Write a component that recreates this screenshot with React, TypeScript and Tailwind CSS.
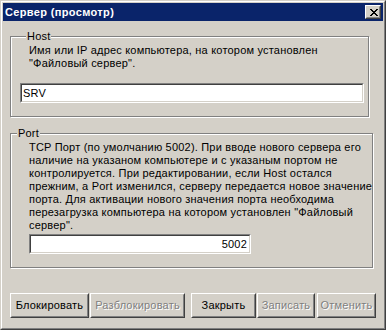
import React from "react";

const face = "font-['Liberation_Sans',Arial,sans-serif]";

// classic raised 3d button
const Button: React.FC<{ label: string; w: string; disabled?: boolean }> = ({ label, w, disabled }) => (
  <div className={`h-[25px] ${w} border border-t-white border-l-white border-r-[#404040] border-b-[#404040]`}>
    <div className="flex h-full items-center justify-center border border-t-[#d4d0c8] border-l-[#d4d0c8] border-r-[#808080] border-b-[#808080]">
      <span className={disabled ? "text-[#808080] [text-shadow:1px_1px_0_#fff]" : "text-black"}>{label}</span>
    </div>
  </div>
);

// sunken edit box
const Field: React.FC<{ value: string; w: string; right?: boolean }> = ({ value, w, right }) => (
  <div className={`h-[20px] ${w} border border-t-[#808080] border-l-[#808080] border-r-white border-b-white`}>
    <div
      className={`flex h-full items-center bg-white border border-t-[#404040] border-l-[#404040] border-r-[#d4d0c8] border-b-[#d4d0c8] ${
        right ? "justify-end pr-[2px]" : "pl-[1px]"
      }`}
    >
      {value}
    </div>
  </div>
);

const CloseGlyph = () => {
  const rows = ["XX....XX", ".XX..XX.", "..XXXX..", "...XX...", "..XXXX..", ".XX..XX.", "XX....XX"];
  return (
    <svg width="8" height="7" viewBox="0 0 8 7" shapeRendering="crispEdges">
      {rows.map((r, y) =>
        r.split("").map((c, x) => (c === "X" ? <rect key={`${x}-${y}`} x={x} y={y} width="1" height="1" fill="#000" /> : null))
      )}
    </svg>
  );
};

const portText = [
  "TCP Порт (по умолчанию 5002). При вводе нового сервера его",
  "наличие на указаном компьютере и с указаным портом не",
  "контролируется. При редактировании, если Host остался",
  "прежним, а Port изменился, серверу передается новое значение",
  "порта. Для активации нового значения порта необходима",
  "перезагрузка компьютера на котором установлен \"Файловый",
  "сервер\".",
];

export default function App() {
  return (
    <div className={`${face} text-[11px] leading-[13px] tracking-[0.2px] text-black w-[386px] h-[330px] border border-t-[#d4d0c8] border-l-[#d4d0c8] border-r-[#404040] border-b-[#404040]`}>
      <div className="h-full bg-[#d4d0c8] border border-t-white border-l-white border-r-[#808080] border-b-[#808080] p-[1px] flex flex-col">
        {/* title bar */}
        <div className="h-[18px] bg-[#0a246a] flex items-center justify-between pl-[2px] pr-[2px]">
          <span className="text-white font-bold text-[11px] tracking-[0.35px]">Сервер (просмотр)</span>
          <div className="w-[16px] h-[14px] border border-t-white border-l-white border-r-[#404040] border-b-[#404040] bg-[#d4d0c8]">
            <div className="flex h-full items-center justify-center border border-t-[#d4d0c8] border-l-[#d4d0c8] border-r-[#808080] border-b-[#808080] pl-[1px]">
              <CloseGlyph />
            </div>
          </div>
        </div>

        <div className="flex flex-col pl-[7px] pt-[9px]">
          <fieldset className="w-[359px] border border-[#808080] shadow-[inset_1px_1px_0_#fff,1px_1px_0_#fff] pl-[9px] pt-[1px] pb-[13px]">
            <legend className="ml-[6px] px-[1px] bg-[#d4d0c8]">Host</legend>
            <div className="pl-[9px] whitespace-nowrap">
              <div>Имя или IP адрес компьютера, на котором установлен</div>
              <div>"Файловый сервер".</div>
            </div>
            <div className="mt-[13px]">
              <Field value="SRV" w="w-[344px]" />
            </div>
          </fieldset>

          <fieldset className="mt-[10px] w-[359px] border border-[#808080] shadow-[inset_1px_1px_0_#fff,1px_1px_0_#fff] pl-[18px] pt-[1px] pb-[13px]">
            <legend className="ml-[-12px] px-[1px] bg-[#d4d0c8]">Port</legend>
            <div className="whitespace-nowrap">
              {portText.map((l) => (
                <div key={l}>{l}</div>
              ))}
            </div>
            <div className="mt-[2px]">
              <Field value="5002" w="w-[222px]" right />
            </div>
          </fieldset>

          <div className="mt-[25px] flex">
            <Button label="Блокировать" w="w-[79px]" />
            <div className="ml-[1px]">
              <Button label="Разблокировать" w="w-[95px]" disabled />
            </div>
            <div className="ml-[6px]">
              <Button label="Закрыть" w="w-[65px]" />
            </div>
            <div className="ml-[1px]">
              <Button label="Записать" w="w-[58px]" disabled />
            </div>
            <div className="ml-[2px]">
              <Button label="Отменить" w="w-[59px]" disabled />
            </div>
          </div>
        </div>
      </div>
    </div>
  );
}
